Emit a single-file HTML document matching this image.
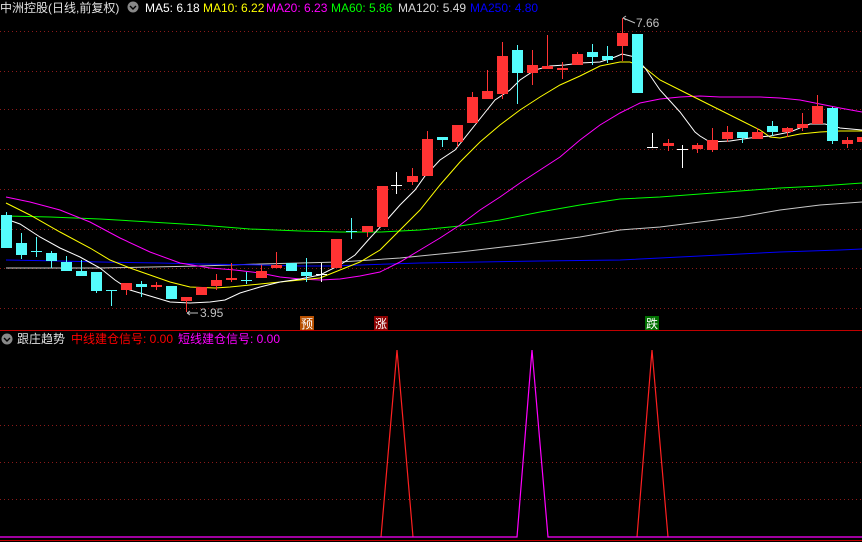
<!DOCTYPE html>
<html><head><meta charset="utf-8"><style>
html,body{margin:0;padding:0;background:#000;width:862px;height:542px;overflow:hidden}
svg{display:block}
text{font-family:"Liberation Sans","Noto Sans CJK SC",sans-serif;font-size:12px}
</style></head><body>
<svg id="s" width="862" height="542" xmlns="http://www.w3.org/2000/svg">
<rect width="862" height="542" fill="#000"/>
<g id="grid" stroke="#8b1a1a" stroke-dasharray="1,3" stroke-width="1"></g>
<line x1="0" y1="330.5" x2="862" y2="330.5" stroke="#c00000"/>
<line x1="0" y1="540.5" x2="862" y2="540.5" stroke="#c00000"/>
<g id="ma" fill="none" stroke-width="1"></g>
<g id="c"></g>
<polyline fill="none" stroke="#ff2020" stroke-width="1.2" points="381,537 397,350 413,537"/>
<polyline fill="none" stroke="#ff2020" stroke-width="1.2" points="637,537 652,350 668,537"/>
<polyline fill="none" stroke="#ff00ff" stroke-width="1.2" points="0,537 517,537 532,350 548,537 862,537"/>
<text x="0" y="12" fill="#e0e0e0">中洲控股(日线,前复权)</text>
<circle cx="133" cy="7" r="5.5" fill="#888"/><path d="M130,6 l3,3 l3,-3" stroke="#000" fill="none" stroke-width="1.4"/>
<text x="145" y="12" fill="#fff">MA5: 6.18</text>
<text x="203" y="12" fill="#ffff00">MA10: 6.22</text>
<text x="266" y="12" fill="#ff00ff">MA20: 6.23</text>
<text x="331" y="12" fill="#00ff00">MA60: 5.86</text>
<text x="398" y="12" fill="#d8d8d8">MA120: 5.49</text>
<text x="470" y="12" fill="#0000ff">MA250: 4.80</text>
<circle cx="7" cy="339" r="5.5" fill="#888"/><path d="M4,338 l3,3 l3,-3" stroke="#000" fill="none" stroke-width="1.4"/>
<text x="17" y="343" fill="#e0e0e0">跟庄趋势</text>
<text x="71" y="343" fill="#ff0000">中线建仓信号: 0.00</text>
<text x="178" y="343" fill="#ff00ff">短线建仓信号: 0.00</text>
<text x="200" y="317" fill="#c0c0c0" font-size="11">3.95</text>
<path d="M187,313 h11 M187,313 l3,-2 M187,313 l3,2" stroke="#c0c0c0" fill="none"/>
<text x="636" y="27" fill="#c0c0c0" font-size="11">7.66</text>
<path d="M623,18 l3,-2 M623,18 l3,2 M623,18 l12,5" stroke="#c0c0c0" fill="none"/>
<rect x="300" y="316" width="14" height="14" fill="#b85000"/><text x="301" y="328" fill="#fff">预</text>
<rect x="374" y="316" width="14" height="14" fill="#8a0000"/><text x="375" y="328" fill="#fff">涨</text>
<rect x="645" y="316" width="14" height="14" fill="#007000"/><text x="646" y="328" fill="#fff">跌</text>
</svg>
<script>
var NS="http://www.w3.org/2000/svg";
function el(p,t,a){var e=document.createElementNS(NS,t);for(var k in a)e.setAttribute(k,a[k]);p.appendChild(e);return e;}
var g=document.getElementById('grid');
[31,71,109,149,189,229,268,308,387,425,462,499].forEach(function(y){el(g,'line',{x1:0,x2:862,y1:y+.5,y2:y+.5});});
var ma=document.getElementById('ma');
var L={
"#00ff00":"6,216 50,217 100,219 150,222 200,225 250,229 300,231 340,232 380,232 420,230 460,226 500,220 540,212 580,205 620,199 660,197 700,194 740,191 780,188 820,186 862,183",
"#c8c8c8":"6,268 100,268 200,266 260,264 340,262 400,258 460,252 520,245 580,237 620,230 660,227 700,222 740,217 780,210 820,205 862,202",
"#0000ff":"6,260 60,261 100,262 160,263 200,264 260,265 300,266 330,266 360,265 420,263 480,262 540,261 620,260 660,258 720,255 780,252 840,250 862,249",
"#ff00ff":"6,197 30,202 60,210 90,222 120,238 150,252 180,263 210,268 235,270 260,273 280,277 300,279 320,280 340,279 360,276 380,272 400,262 420,250 440,238 460,225 480,210 500,197 520,183 540,170 560,157 580,140 600,125 620,113 640,103 660,99 680,97 700,96 720,97 760,97 780,98 800,100 820,104 840,108 862,112",
"#ffff00":"6,203 30,215 60,232 90,248 110,260 130,268 150,275 170,282 190,287 215,288 230,287 250,285 270,283 300,280 320,278 340,270 360,262 380,250 400,230 420,210 440,185 460,162 480,142 500,125 520,110 540,97 560,85 580,76 600,66 620,62 630,62 645,68 660,80 680,90 700,100 720,110 740,120 760,130 770,137 780,138 800,134 820,132 840,131 862,131",
"#ffffff":"6,219 20,224 40,237 60,248 80,257 100,268 115,280 130,290 150,296 170,302 190,303 210,302 225,300 240,293 260,287 280,282 300,279 320,275 340,265 355,255 370,238 385,222 400,205 415,190 425,176 440,160 455,150 475,125 495,100 510,90 520,80 535,70 550,66 565,65 580,63 600,62 615,57 622,54 635,57 645,68 660,90 680,112 695,132 700,136 710,142 730,141 750,138 770,136 790,132 810,124 825,124 840,128 862,130"};
for(var k in L)el(ma,'polyline',{points:L[k],stroke:k});
// [center, type(r/c/w), bodyTop, bodyBot, wickTop, wickBot]
var C=[[6,'c',215,248,212,248],[21,'c',243,255,233,259],[36,'c',251,251,237,257],[51,'c',253,261,251,268],[66,'c',262,271,256,271],[81,'c',271,276,260,276],[96,'c',272,291,272,293],[111,'c',290,290,290,306],[126,'r',283,290,283,295],[141,'c',284,287,281,297],[156,'r',285,287,282,290],[171,'c',286,299,286,299],[186,'r',297,301,297,312],[201,'r',287,295,287,295],[216,'r',280,286,274,290],[231,'r',278,280,263,282],[246,'c',280,280,272,284],[261,'r',271,278,265,278],[276,'r',265,268,252,268],[291,'c',263,271,263,271],[306,'c',272,276,258,282],[321,'w',274,274,263,282],[336,'r',239,268,239,268],[351,'c',231,231,218,239],[367,'r',226,232,226,237],[382,'r',186,227,186,227],[396,'w',185,185,172,194],[412,'r',176,182,168,185],[427,'r',139,176,131,176],[442,'c',137,140,137,147],[457,'r',125,142,125,147],[472,'r',97,123,92,123],[487,'r',91,99,70,99],[502,'r',56,94,42,99],[517,'c',50,73,45,104],[532,'r',65,73,50,85],[547,'r',66,69,35,69],[562,'r',68,70,62,79],[577,'r',54,65,52,65],[592,'c',52,57,44,65],[607,'c',56,60,46,63],[622,'r',33,46,18,61],[637,'c',34,93,34,93],[652,'w',147,147,133,147],[668,'r',143,146,139,151],[682,'w',149,149,145,168],[697,'r',145,149,143,153],[712,'r',140,150,128,152],[727,'r',132,139,126,142],[742,'c',132,138,132,143],[757,'r',132,139,128,139],[772,'c',126,132,121,136],[787,'r',128,132,127,137],[802,'r',124,128,113,131],[817,'r',106,124,95,124],[832,'c',108,141,107,144],[847,'r',140,144,137,148],[862,'r',137,142,135,145]];
var cg=document.getElementById('c');
C.forEach(function(d){var col=d[1]=='r'?'#ff3333':d[1]=='c'?'#54fcfc':'#ffffff';
el(cg,'rect',{x:d[0],y:d[4],width:1,height:Math.max(1,d[5]-d[4]),fill:col});
el(cg,'rect',{x:d[0]-5,y:d[2],width:11,height:Math.max(1,d[3]-d[2]),fill:col});});
</script>
</body></html>
